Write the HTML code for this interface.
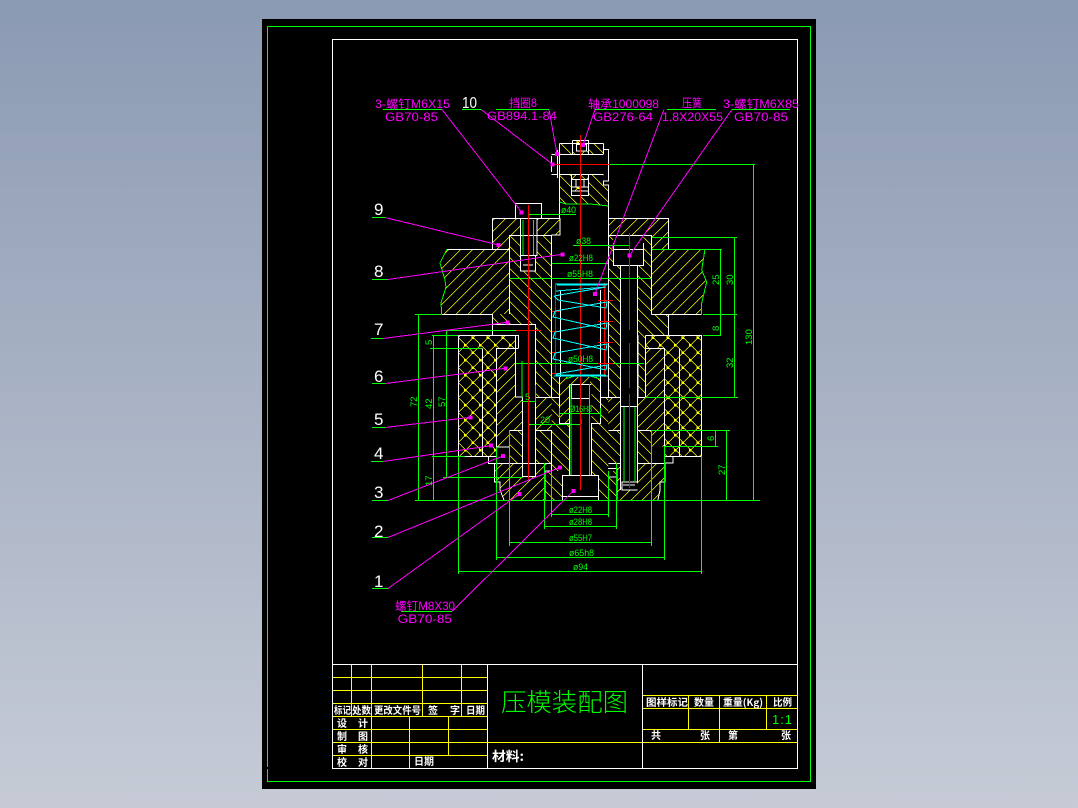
<!DOCTYPE html>
<html><head><meta charset="utf-8"><title>压模装配图</title>
<style>
html,body{margin:0;padding:0;width:1078px;height:808px;overflow:hidden;background:linear-gradient(180deg,#8b9ab3 0%,#c6cbd6 100%)}
svg{position:absolute;left:0;top:0;display:block}
text{font-family:"Liberation Sans","Noto Sans CJK SC",sans-serif}
.m{fill:#ff00ff;font-size:11.5px}
.g{fill:#00ff00;font-size:9.5px}
.w{fill:#fff;font-size:17px;font-family:"Liberation Sans",sans-serif}
.t{fill:#fff;font-size:10px;font-weight:700;font-family:"Noto Sans CJK SC",sans-serif}
pattern *{shape-rendering:crispEdges}
</style></head><body>
<svg width="1078" height="808" viewBox="0 0 1078 808" xmlns="http://www.w3.org/2000/svg">
<defs>
<pattern id="dots" patternUnits="userSpaceOnUse" width="15" height="15" x="0" y="0"><rect x="-1" y="-1" width="2.5" height="2.5" fill="#ff0"/><rect x="14" y="-1" width="2.5" height="2.5" fill="#ff0"/><rect x="-1" y="14" width="2.5" height="2.5" fill="#ff0"/><rect x="14" y="14" width="2.5" height="2.5" fill="#ff0"/><rect x="6.5" y="6.5" width="2.5" height="2.5" fill="#ff0"/></pattern>
<clipPath id="ca12">
<polygon points="447,249 509,249 509,314 441.7,314 441,303 446,287 445,280 440,263"/>
<polygon points="651.7,249 705,249 701.7,270 706.7,282 701.7,303 701.7,314 651.7,314"/>
</clipPath>
<clipPath id="ca10">
<polygon points="492.3,218.3 560,218.3 560,235 509,235 509,249 492.3,249"/>
<polygon points="608.3,218.3 668.3,218.3 668.3,249 651.7,249 651.7,235 608.3,235"/>
<polygon points="559.3,377 590,377 590,384 569.3,384 569.3,423 559.3,423"/>
<polygon points="535.7,397 551.7,397 551.7,430 535.7,430"/>
<polygon points="608.3,397 620.3,397 620.3,430 608.3,430"/>
<polygon points="637.7,397 645,397 645,348.3 664.3,348.3 664.3,446.7 651.7,446.7 651.7,430 637.7,430"/>
<polygon points="496.7,348.3 519,348.3 519,361.7 515.7,361.7 515.7,397 522,397 522,430 509,430 509,447 496.7,447"/>
<polygon points="494,463 552,463 552,470 544.7,471 544.7,500 504,500 501,490 500,485 494,482"/>
<polygon points="617,463 665,463 665,482 660,486 658,500 617,500"/>
</clipPath>
<clipPath id="cb10">
<polygon points="509,235 551.7,235 551.7,397 535.7,397 535.7,324 492.3,324 492.3,314 509,314"/>
<polygon points="608.7,235 651.7,235 651.7,314 668.3,314 668.3,335 645,335 645,397 608.7,397"/>
<polygon points="559.5,143.5 572,143.5 572,154 559.5,154"/>
<polygon points="589,143.5 603.5,143.5 603.5,154 589,154"/>
<polygon points="559.5,174 571,174 571,195 589,195 589,174 603.5,174 603.5,185 608.5,185 608.5,206 600,205 590,204 566,204 559.5,202"/>
<polygon points="551.7,377 559.3,377 559.3,423 569.3,423 569.3,475 562.7,475 562.7,471 551.7,471"/>
<polygon points="590,377 600.7,377 600.7,423 590.7,423 590.7,384 590,384"/>
<polygon points="591.7,423 600.7,423 600.7,397 608.3,397 608.3,471 598,475 591.7,475"/>
<polygon points="509,430 522.3,430 522.3,463 509,463"/>
<polygon points="535.7,430 551.7,430 551.7,463 535.7,463"/>
<polygon points="608.3,430 620.3,430 620.3,463 608.3,463"/>
<polygon points="637.7,430 651.7,430 651.7,463 637.7,463"/>
<polygon points="544.7,471 562.7,475 562.7,500 598,500 598,475 608,471 617,471 617,500 544.7,500"/>
</clipPath>
<clipPath id="cx">
<polygon points="458.3,335 515.7,335 515.7,348.3 496.7,348.3 496.7,456.7 458.3,456.7"/>
<polygon points="645,335 701.7,335 701.7,456.7 664.3,456.7 664.3,348.3 645,348.3"/>
<rect x="572" y="140" width="17" height="4"/>
<rect x="572" y="151" width="17" height="3"/>
<rect x="571" y="174" width="18" height="5"/>
<rect x="571" y="187" width="18" height="4"/>
</clipPath>
</defs>
<rect x="262" y="19" width="554" height="770" fill="#000"/>
<g shape-rendering="crispEdges">
<path d="M267.5 26.5H810.5V781.5H267.5V769M267.5 767V26.5" fill="none" stroke="#00ff00"/>
<rect x="332.5" y="39.5" width="465" height="729" fill="none" stroke="#fff"/>

<!-- hatches -->
<g clip-path="url(#ca12)"><path d="M300 50L850 600" fill="none" stroke="#ffff00" stroke-width="700" stroke-dasharray="0.7 7.785"/></g>
<g clip-path="url(#ca10)"><path d="M300 50L850 600" fill="none" stroke="#ffff00" stroke-width="700" stroke-dasharray="0.7 7.078"/></g>
<g clip-path="url(#cb10)"><path d="M300 620L850 70" fill="none" stroke="#ffff00" stroke-width="700" stroke-dasharray="0.7 7.078"/></g>
<g clip-path="url(#cx)">
<path d="M400 200L900 700" fill="none" stroke="#ffff00" stroke-width="700" stroke-dasharray="1 9.607"/>
<path d="M400 700L900 200" fill="none" stroke="#ffff00" stroke-width="700" stroke-dasharray="1 9.607"/>
<rect x="440" y="130" width="270" height="340" fill="url(#dots)"/>
</g>
<!-- voids -->
<g fill="#000">
<polygon points="520.3,218 537,218 537,256 535.7,256 535.7,271 520.3,271"/>
<polygon points="516,324 535.7,324 535.7,476.7 522.3,476.7 522.3,397 516,397"/>
<rect x="613" y="236" width="30.3" height="30"/>
<rect x="620.3" y="266" width="17.4" height="216"/>
<rect x="622" y="482" width="15" height="8"/>
<rect x="569.3" y="384" width="22.4" height="91"/>
<rect x="562.7" y="475" width="35.3" height="22"/>
</g>

<!-- white outlines -->
<path fill="none" stroke="#fff" d="
M559.5 143.5H603.5M559.5 143.5V218M603.5 143.5V154M559.5 154.5H603.5M559.5 174.5H603.5M603.5 149.5H608.5V181H603.5V185H608.5V397
M557.5 150V178M551.5 156V172M551.5 154.5H557.5M551.5 174.5H557.5
M572.5 140.5H588.5V154M572.5 140.5V154M576.5 144.5H586.5V151H576.5Z
M571.5 174V195.5H588.5V174M571.5 179.5H588.5M571.5 187H588.5M571.5 191H588.5M576 179.5V187M584 179.5V187
M515.5 203.5H541.5V218.5M515.5 203.5V218.5
M492.5 218.5H560V235H551.5M492.5 218.5V249M608.5 218.5H668.5V249.5
M608.5 235.5H651.5V314.5M613.5 243V266M643.5 243V266M613.5 249.5H643.5V265.5H613.5Z
M520.5 218V271H535.5V256M520.5 255.5H537V218M523 265H533
M509.5 235V314M509.5 235.5H551.5V397
M447 249.5H509M651.5 249.5H705M441.7 314.5H492.5V335M492.5 324.5H535.5V476.5H522.5V397H515.5V335
M651.5 314.5H701.7M668.5 314.5V335
M458.5 335.5H518.5V348M458.5 335.5V456.5H496.5V348.5H518.5M482.5 348.5V456.5
M645.5 335.5H701.5V456.5H664.5V348.5H645.5M679.5 348.5V456.5M645.5 335.5V397M638 335V397
M620.5 266V397V490M637.5 266V482H622V490H637.5M620.5 406.5H637.5M623 485H635
M535.5 397.5H559.5M600.7 397.5H620.5M637.5 397.5H645
M551.5 283V377M560.5 290V377M600.5 290V377M559.5 377V423.5H569.5M600.5 377V423.5H591.5
M569.5 384.5V475.5M591.5 423V475M569.5 384.5H591.5M571.5 384.5V398.5H589.5V384.5
M562.5 475.5H598.5V496.5H562.5ZM562.5 496.5V500M598.5 496.5V500
M509.5 430.5H522.5M535.5 430.5H551.5M608.5 430.5H620.5M637.5 430.5H651.5V463M509.5 430.5V463M551.5 430V471H545V500M496.5 447H509.5
M488.5 456.5H496.5M664.5 456.5H673V463H665V482H660V490L658 500M488.5 456.5V463.5H494.5V482H500V490L504 500
M494.5 463.5H551.5M608.5 463.5H620.5M637.5 463.5H664.5M522.5 463.5H535.5
M504 500.5H658M608 468.5H617V477H608M617 477V500
"/>

<!-- green -->
<path fill="none" stroke="#00ff00" d="
M610 164.5H755M753.5 164V500M652 237.5H737M734.5 237V397M652 249.5H722M720.5 249V335M703 314.5H737M703 335.5H721
M645 397.5H738M652 430.5H730M664 446.5H718M715.5 430V447M726.5 430V500M415 500.5H760
M415 314.5H441M418.5 314V500M433.5 335V500M446.5 330V477M446 330.5H516M432 335.5H458M430 348.5H482M432 456.5H465M443 477.5H523
M528 214.5H576M573 245.5H629M552 263.5H608M509 278.5H652M516 363.5H644M559 413.5H601M522 401.5H536M528 424.5H580
M552 514.5H608M544 526.5H617M510 542.5H652M497 557.5H665M458 571.5H702
M458.5 456V574M701.5 456V574M496.5 447V560M664.5 447V560M509.5 430V546M651.5 430V546M544.5 463V529M616.5 463V529M551.5 471V517M608.5 471V517
M522 361V398M535.5 385V403M581 424V419M528.5 420V428M580.5 420V428
M559.5 408V418M600.5 408V418
M447 249L440 263L445 280L446 287L441 303L441.7 314
M705 249L701.7 270L706.7 282L701.7 303L701.7 314
M559.5 202L566 204L590 204L600 205L608.5 206
M565 379L575 376L590 376L600 379
M523 220V255M533.5 220V255M571 384V475M589.5 384V475M624 407V482M635 407V482
"/>

<!-- red -->
<path fill="none" stroke="#ff0000" d="
M580.5 135V490M528.5 205V480M629.5 233V330M629.5 343V388M629.5 394V488
M552 164.5H610M516 330.5H541
M555.5 283V375M604.5 283V377
M598 300.5H613M598 321.5H613M598 342.5H613M598 363.5H613
M552 311.5H560M552 331.5H560M552 352.5H560M552 373.5H560
"/>

<!-- cyan spring -->
<path fill="none" stroke="#00ffff" d="
M556 284H608M557 285H607M554 376H608M556 375H606
M554 296L606 287M606 287L556 291
M554 296L558 300L606 308L607 302L555 311
M555 311L553 317L606 329L607 323L555 332
M555 332L553 338L606 350L607 344L555 353
M555 353L553 359L606 370L607 365L556 374
"/>

<!-- magenta leaders -->
<g fill="none" stroke="#ff00ff">
<path d="M442 109.5L521.7 212.3"/>
<path d="M549 109.5L557 154"/>
<path d="M595 109.5L583 145"/>
<path d="M664 109.5L595 294"/>
<path d="M732 109.5L629.3 255.7"/>
<path d="M452 611.5L573.3 491"/>
</g>
<path fill="none" stroke="#00ff00" d="M383 109.5H442M496 109.5H549M595 109.5H652M667 109.5H716M732 109.5H790M401 611.5H452M462 109.5H481M372 217.5H385M372 279.5H388M371 338.5H383M372 383.5H385M372 427.5H385M371 461.5H383M372 500.5H388M372 537.5H388M372 588.5H388"/>
<path fill="none" stroke="#ff00ff" d="
M481 109.5L552.7 164.3
M385 217.5L498.7 245
M388 279.5L562.3 254.3
M383 338.5L507.7 322.3
M385 383.5L505.7 368.3
M385 427.5L470.7 417.3
M383 461.5L491 445.7
M388 500.5L503 456
M388 537.5L560 467.3
M388 588.5L519.3 494"/>
<g fill="#ff00ff">
<rect x="519.7" y="210.3" width="4" height="4"/><rect x="550.7" y="162.3" width="4" height="4"/><rect x="555" y="152" width="4" height="4"/><rect x="581" y="143" width="4" height="4"/>
<rect x="593" y="292" width="4" height="4"/><rect x="627.3" y="253.7" width="4" height="4"/><rect x="496.7" y="243" width="4" height="4"/><rect x="560.3" y="252.3" width="4" height="4"/>
<rect x="505.7" y="320.3" width="4" height="4"/><rect x="503.7" y="366.3" width="4" height="4"/><rect x="468.7" y="415.3" width="4" height="4"/><rect x="489" y="443.7" width="4" height="4"/>
<rect x="501" y="454" width="4" height="4"/><rect x="558" y="465.3" width="4" height="4"/><rect x="517.3" y="492" width="4" height="4"/><rect x="571.3" y="489" width="4" height="4"/>
</g>

<!-- title block -->
<path fill="none" stroke="#ffff00" d="
M333 677.5H487M333 690.5H487M333 703.5H487M333 716.5H487M333 729.5H487M333 742.5H797M333 755.5H487
M351.5 664V716M371.5 664V768M422.5 664V716M461.5 664V716M409.5 716V768M448.5 716V755
M642 695.5H797M642 708.5H797M642 729.5H797
M688.5 695V729M719.5 695V742M766.5 695V729"/>
<path fill="none" stroke="#fff" d="M333 664.5H797M487.5 664V768M642.5 664V768"/>
</g>

<!-- magenta text -->
<text class="m" x="375" y="108" textLength="75" lengthAdjust="spacingAndGlyphs">3-螺钉M6X15</text>
<text class="m" x="385" y="121" textLength="53" lengthAdjust="spacingAndGlyphs">GB70-85</text>
<text class="w" style="font-size:16px" x="462" y="108" textLength="15" lengthAdjust="spacingAndGlyphs">10</text>
<text class="m" x="509" y="107" textLength="28" lengthAdjust="spacingAndGlyphs">挡圈8</text>
<text class="m" x="487" y="120" textLength="70" lengthAdjust="spacingAndGlyphs">GB894.1-84</text>
<text class="m" x="588" y="108" textLength="71" lengthAdjust="spacingAndGlyphs">轴承1000098</text>
<text class="m" x="593" y="121" textLength="60" lengthAdjust="spacingAndGlyphs">GB276-64</text>
<text class="m" x="682" y="107" textLength="20" lengthAdjust="spacingAndGlyphs">压簧</text>
<text class="m" x="662" y="121" textLength="61" lengthAdjust="spacingAndGlyphs">1.8X20X55</text>
<text class="m" x="723" y="108" textLength="76" lengthAdjust="spacingAndGlyphs">3-螺钉M6X85</text>
<text class="m" x="734" y="121" textLength="54" lengthAdjust="spacingAndGlyphs">GB70-85</text>
<text class="m" x="395" y="610" textLength="60" lengthAdjust="spacingAndGlyphs">螺钉M8X30</text>
<text class="m" x="397.7" y="623" textLength="54.3" lengthAdjust="spacingAndGlyphs">GB70-85</text>

<!-- part numbers -->
<text class="w" x="374" y="215">9</text>
<text class="w" x="374" y="277">8</text>
<text class="w" x="374" y="335">7</text>
<text class="w" x="374" y="382">6</text>
<text class="w" x="374" y="425">5</text>
<text class="w" x="374" y="459">4</text>
<text class="w" x="374" y="498">3</text>
<text class="w" x="374" y="537">2</text>
<text class="w" x="374" y="587">1</text>

<!-- dimension text -->
<text class="g" x="561" y="213" textLength="15" lengthAdjust="spacingAndGlyphs">ø40</text>
<text class="g" x="576" y="244" textLength="15" lengthAdjust="spacingAndGlyphs">ø38</text>
<text class="g" x="569" y="261" textLength="24" lengthAdjust="spacingAndGlyphs">ø22H8</text>
<text class="g" x="567" y="277" textLength="26" lengthAdjust="spacingAndGlyphs">ø55H8</text>
<text class="g" x="568" y="362" textLength="25" lengthAdjust="spacingAndGlyphs">ø50H8</text>
<text class="g" x="570" y="412" textLength="22" lengthAdjust="spacingAndGlyphs">Ø16H8</text>
<text class="g" x="525" y="400">5</text>
<text class="g" x="540" y="423" textLength="10" lengthAdjust="spacingAndGlyphs">20</text>
<text class="g" x="569" y="513" textLength="23" lengthAdjust="spacingAndGlyphs">ø22H8</text>
<text class="g" x="569" y="525" textLength="23" lengthAdjust="spacingAndGlyphs">ø28H8</text>
<text class="g" x="569" y="541" textLength="23" lengthAdjust="spacingAndGlyphs">ø55H7</text>
<text class="g" x="569" y="556" textLength="25" lengthAdjust="spacingAndGlyphs">ø65h8</text>
<text class="g" x="573" y="570" textLength="15" lengthAdjust="spacingAndGlyphs">ø94</text>
<g>
<text class="g" transform="rotate(-90 752 345)" x="752" y="345">130</text>
<text class="g" transform="rotate(-90 733 285)" x="733" y="285">30</text>
<text class="g" transform="rotate(-90 733 368)" x="733" y="368">32</text>
<text class="g" transform="rotate(-90 719 285)" x="719" y="285">25</text>
<text class="g" transform="rotate(-90 719 331)" x="719" y="331">8</text>
<text class="g" transform="rotate(-90 714 441)" x="714" y="441">6</text>
<text class="g" transform="rotate(-90 725 475)" x="725" y="475">27</text>
<text class="g" transform="rotate(-90 417 407)" x="417" y="407">72</text>
<text class="g" transform="rotate(-90 432 409)" x="432" y="409">42</text>
<text class="g" transform="rotate(-90 445 407)" x="445" y="407">57</text>
<text class="g" transform="rotate(-90 432 345)" x="432" y="345">5</text>
<text class="g" transform="rotate(-90 432 486)" x="432" y="486">17</text>
</g>

<!-- title block text -->
<text x="501" y="711" textLength="127" lengthAdjust="spacingAndGlyphs" style="fill:#00ff00;font-size:25px;font-family:'Noto Sans CJK SC',sans-serif;font-weight:300">压模装配图</text>
<g class="t">
<text class="t" x="334" y="714" textLength="17" lengthAdjust="spacingAndGlyphs">标记</text>
<text class="t" x="352" y="714" textLength="19" lengthAdjust="spacingAndGlyphs">处数</text>
<text class="t" x="374" y="714" textLength="47" lengthAdjust="spacingAndGlyphs">更改文件号</text>
<text class="t" x="428" y="714">签</text>
<text class="t" x="450" y="714">字</text>
<text class="t" x="466" y="714" textLength="19" lengthAdjust="spacingAndGlyphs">日期</text>
<text class="t" x="337" y="727">设</text><text class="t" x="358" y="727">计</text>
<text class="t" x="337" y="740">制</text><text class="t" x="358" y="740">图</text>
<text class="t" x="337" y="753">审</text><text class="t" x="358" y="753">核</text>
<text class="t" x="337" y="766">校</text><text class="t" x="358" y="766">对</text>
<text class="t" x="414" y="765" textLength="20" lengthAdjust="spacingAndGlyphs">日期</text>
<text class="t" style="font-size:13px" x="492" y="761" textLength="32" lengthAdjust="spacingAndGlyphs">材料:</text>
<text class="t" x="646" y="706" textLength="42" lengthAdjust="spacingAndGlyphs">图样标记</text>
<text class="t" x="694" y="706" textLength="20" lengthAdjust="spacingAndGlyphs">数量</text>
<text class="t" x="723" y="706" textLength="40" lengthAdjust="spacingAndGlyphs">重量(Kg)</text>
<text class="t" x="773" y="706" textLength="19" lengthAdjust="spacingAndGlyphs">比例</text>
<text class="t" x="651" y="739">共</text><text class="t" x="700" y="739">张</text>
<text class="t" x="728" y="739">第</text><text class="t" x="781" y="739">张</text>
</g>
<text x="772" y="724" textLength="20" lengthAdjust="spacing" style="fill:#00ff00;font-size:13px;font-weight:300">1:1</text>
</svg>
</body></html>
